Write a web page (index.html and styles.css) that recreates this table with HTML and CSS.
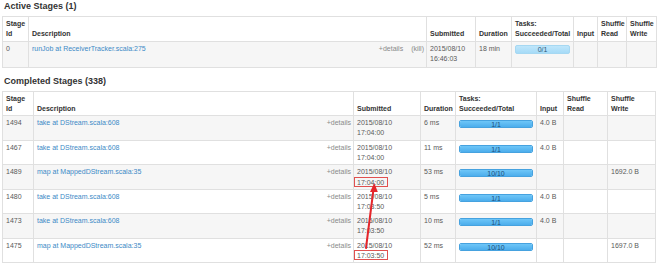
FILE: index.html
```html
<!DOCTYPE html>
<html lang="en">
<head>
<meta charset="utf-8">
<title>Stages</title>
<link rel="stylesheet" href="styles.css">
</head>
<body>
<div class="page">
  <h4 class="section-title">Active Stages (1)</h4>
  <table class="stages active">
    <colgroup>
      <col class="w26"><col class="w398"><col class="w49"><col class="w36"><col class="w62"><col class="w24"><col class="w29"><col class="w30">
    </colgroup>
    <thead>
      <tr><th>Stage<br>Id</th><th>Description</th><th>Submitted</th><th>Duration</th><th>Tasks:<br>Succeeded/Total</th><th>Input</th><th>Shuffle<br>Read</th><th>Shuffle<br>Write</th></tr>
    </thead>
    <tbody>
      <tr>
        <td>0</td>
        <td><div class="desc"><a class="name" href="#">runJob at ReceiverTracker.scala:275</a><span class="actions"><span class="details">+details</span><span class="kill">(kill)</span></span></div></td>
        <td>2015/08/10 16:46:03</td>
        <td>18 min</td>
        <td><div class="progress running"><div class="bar" style="width:0%"></div><span class="label">0/1</span></div></td>
        <td></td><td></td><td></td>
      </tr>
    </tbody>
  </table>

  <h4 class="section-title completed">Completed Stages (338)</h4>
  <table class="stages done">
    <colgroup>
      <col class="w31"><col class="w320"><col class="w67"><col class="w35"><col class="w81"><col class="w27"><col class="w44"><col class="w48">
    </colgroup>
    <thead>
      <tr><th>Stage<br>Id</th><th>Description</th><th>Submitted</th><th>Duration</th><th>Tasks:<br>Succeeded/Total</th><th>Input</th><th>Shuffle<br>Read</th><th>Shuffle<br>Write</th></tr>
    </thead>
    <tbody>
      <tr>
        <td>1494</td>
        <td><div class="desc"><a class="name" href="#">take at DStream.scala:608</a><span class="details">+details</span></div></td>
        <td>2015/08/10 17:04:00</td>
        <td>6 ms</td>
        <td><div class="progress"><div class="bar" style="width:100%"></div><span class="label">1/1</span></div></td>
        <td>4.0 B</td><td></td><td></td>
      </tr>
      <tr>
        <td>1467</td>
        <td><div class="desc"><a class="name" href="#">take at DStream.scala:608</a><span class="details">+details</span></div></td>
        <td>2015/08/10 17:04:00</td>
        <td>11 ms</td>
        <td><div class="progress"><div class="bar" style="width:100%"></div><span class="label">1/1</span></div></td>
        <td>4.0 B</td><td></td><td></td>
      </tr>
      <tr>
        <td>1489</td>
        <td><div class="desc"><a class="name" href="#">map at MappedDStream.scala:35</a><span class="details">+details</span></div></td>
        <td>2015/08/10 <span class="mark">17:04:00</span></td>
        <td>53 ms</td>
        <td><div class="progress"><div class="bar" style="width:100%"></div><span class="label">10/10</span></div></td>
        <td></td><td></td><td>1692.0 B</td>
      </tr>
      <tr>
        <td>1480</td>
        <td><div class="desc"><a class="name" href="#">take at DStream.scala:608</a><span class="details">+details</span></div></td>
        <td>2015/08/10 17:03:50</td>
        <td>5 ms</td>
        <td><div class="progress"><div class="bar" style="width:100%"></div><span class="label">1/1</span></div></td>
        <td>4.0 B</td><td></td><td></td>
      </tr>
      <tr>
        <td>1473</td>
        <td><div class="desc"><a class="name" href="#">take at DStream.scala:608</a><span class="details">+details</span></div></td>
        <td>2015/08/10 17:03:50</td>
        <td>10 ms</td>
        <td><div class="progress"><div class="bar" style="width:100%"></div><span class="label">1/1</span></div></td>
        <td>4.0 B</td><td></td><td></td>
      </tr>
      <tr>
        <td>1475</td>
        <td><div class="desc"><a class="name" href="#">map at MappedDStream.scala:35</a><span class="details">+details</span></div></td>
        <td>2015/08/10 <span class="mark">17:03:50</span></td>
        <td>52 ms</td>
        <td><div class="progress"><div class="bar" style="width:100%"></div><span class="label">10/10</span></div></td>
        <td></td><td></td><td>1697.0 B</td>
      </tr>
    </tbody>
  </table>
</div>
<svg class="annotation" width="657" height="264" viewBox="0 0 657 264" aria-hidden="true">
  <line x1="366" y1="248" x2="373.4" y2="190" stroke="#e4262b" stroke-width="2" stroke-linecap="round"/>
  <polygon points="374.3,183 370,192 377.8,192" fill="#e4262b"/>
</svg>
</body>
</html>
```
FILE: styles.css
```css
html, body {
  margin: 0;
  padding: 0;
}

body {
  position: relative;
  width: 657px;
  height: 264px;
  overflow: hidden;
  background: #fff;
  font-family: "Liberation Sans", Arial, Helvetica, sans-serif;
  font-size: 7px;
  line-height: 10px;
  color: #4a4a4a;
}

.page {
  padding-left: 2px;
}

.section-title {
  margin: 0 0 4px 2px;
  font-size: 9px;
  line-height: 12px;
  font-weight: bold;
  color: #333;
}

.section-title.completed {
  margin-top: 7px;
}

.stages {
  border-collapse: collapse;
  table-layout: fixed;
}

.stages.active { width: 654px; }
.stages.done { width: 653px; }

.w24 { width: 24px; }
.w26 { width: 26px; }
.w27 { width: 27px; }
.w29 { width: 29px; }
.w30 { width: 30px; }
.w31 { width: 31px; }
.w35 { width: 35px; }
.w36 { width: 36px; }
.w44 { width: 44px; }
.w48 { width: 48px; }
.w49 { width: 49px; }
.w62 { width: 62px; }
.w67 { width: 67px; }
.w81 { width: 81px; }
.w320 { width: 320px; }
.w398 { width: 398px; }

.stages th,
.stages td {
  border: 1px solid #e0e0e0;
  padding: 2px 3px 1.5px;
  line-height: 10px;
  text-align: left;
  vertical-align: top;
}

.stages th {
  vertical-align: bottom;
  font-weight: bold;
  color: #333;
  white-space: nowrap;
  background: #fff;
}

.stages td {
  color: #5a5a5a;
}

.stages tbody tr:nth-child(odd) td {
  background: #f6f6f6;
}

.stages.active tbody td {
  padding-bottom: 3px;
}

.stages td:nth-child(2) {
  padding-right: 2px;
}

.desc {
  display: flex;
  justify-content: space-between;
  align-items: flex-start;
}

.name {
  color: #3d8ac6;
  text-decoration: none;
}

.actions {
  display: flex;
  gap: 8px;
}

.details,
.kill {
  color: #8a8a8a;
}

.progress {
  display: grid;
  height: 8px;
  margin-top: 2px;
  border: 1px solid #9fd0ee;
  border-radius: 2px;
  box-sizing: border-box;
  background: linear-gradient(#f4f4f4, #fafafa);
  overflow: hidden;
}

.progress.running {
  height: 9px;
  margin-top: 1px;
  border-color: #a6d8f2;
  background: linear-gradient(#bfe6fb, #a6dbf7);
}

.progress .bar,
.progress .label {
  grid-area: 1 / 1;
}

.progress .bar {
  height: 100%;
  background: linear-gradient(#6ec6f8, #46a9ea);
}

.progress:not(.running) {
  border-color: #46a2df;
}

.progress .label {
  text-align: center;
  line-height: 7px;
  font-size: 7px;
  color: #22507a;
}

.progress.running .label {
  line-height: 7px;
  color: #2d5878;
}

.mark {
  margin-left: -3px;
  padding: 0.5px 3px 0.5px 2px;
  border: 1px solid #e0504f;
}

.annotation {
  position: absolute;
  left: 0;
  top: 0;
  pointer-events: none;
}
```
